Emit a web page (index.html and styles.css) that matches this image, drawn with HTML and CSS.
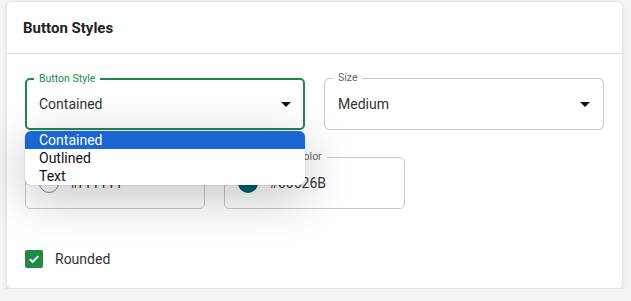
FILE: index.html
```html
<!DOCTYPE html>
<html lang="en">
<head>
  <meta charset="UTF-8" />
  <meta name="viewport" content="width=device-width, initial-scale=1.0" />
  <title>Button Styles</title>
  <link rel="stylesheet" href="styles.css">
</head>

<body>
  <div class="card">
    <header>Button Styles</header>

    <div class="content">
      <div class="row two">
        <div class="field focused">
          <span class="label">Button Style</span>
          <span class="value">Contained</span>
          <span class="arrow"></span>

          <ul class="menu">
            <li class="selected">Contained</li>
            <li>Outlined</li>
            <li>Text</li>
          </ul>
        </div>

        <div class="field">
          <span class="label">Size</span>
          <span class="value">Medium</span>
          <span class="arrow"></span>
        </div>
      </div>

      <div class="row three">
        <div class="field">
          <span class="label">Text Color</span>
          <span class="swatch white"></span>
          <span class="value">#FFFFFF</span>
        </div>

        <div class="field">
          <span class="label">Background Color</span>
          <span class="swatch teal"></span>
          <span class="value">#00626B</span>
        </div>
      </div>

      <label class="check">
        <span class="box">
          <svg width="12" height="12" viewBox="0 0 12 12">
            <path d="M1.8 6.2 L4.7 9 L10.3 3.2" fill="none" stroke="#fff" stroke-width="1.9" />
          </svg>
        </span>
        Rounded
      </label>
    </div>
  </div>
</body>
</html>
```

FILE: styles.css
```css
:root {
  --green: #1e8a48;
  --text: #333;
  --line: #c8c8c8;
  --bg: #f4f4f7;
}

* {
  box-sizing: border-box;
}

body {
  margin: 0;
  padding: 1px 8px 0 6px;
  background: var(--bg);
  font-family: Roboto, "Liberation Sans", sans-serif;
  color: var(--text);
}

.card {
  background: #fff;
  border-radius: 5px;
  border: 1px solid #e6e6ea;
  box-shadow: 0 2px 3px rgba(40, 40, 80, 0.12);
}

header {
  height: 52px;
  display: flex;
  align-items: center;
  padding: 0 16px;
  font-size: 15px;
  font-weight: 700;
  color: #222;
  border-bottom: 1px solid #e3e3e3;
}

.content {
  padding: 24px 18px 20px 18px;
}

.row {
  display: grid;
  gap: 19px;
  margin-bottom: 27px;
}

.row.two {
  grid-template-columns: 1fr 1fr;
}

.row.three {
  grid-template-columns: 1fr 1fr 1fr;
  margin-bottom: 41px;
}

.field {
  position: relative;
  height: 52px;
  border: 1px solid var(--line);
  border-radius: 5px;
  display: flex;
  align-items: center;
  padding: 0 13px;
  gap: 11px;
}

.field.focused {
  border: 2px solid var(--green);
  padding: 0 12px;
}

.label {
  position: absolute;
  top: -8px;
  left: 8px;
  padding: 0 5px;
  background: #fff;
  font-size: 10.5px;
  line-height: 14px;
  color: #666;
}

.focused .label {
  left: 7px;
  color: var(--green);
}

.value {
  font-size: 14px;
  color: #333;
}

.arrow {
  margin-left: auto;
  width: 0;
  height: 0;
  border-left: 5px solid transparent;
  border-right: 5px solid transparent;
  border-top: 5px solid #111;
}

.swatch {
  width: 20px;
  height: 20px;
  border-radius: 50%;
  flex-shrink: 0;
}

.swatch.white {
  background: #fff;
  border: 1px solid #8a8a9a;
}

.swatch.teal {
  background: #00626b;
}

.menu {
  position: absolute;
  top: 51px;
  left: -2px;
  right: -2px;
  margin: 0;
  padding: 0;
  list-style: none;
  background: #fff;
  border-radius: 6px;
  overflow: hidden;
  box-shadow: 0 0 1px rgba(0, 0, 0, 0.5), 0 12px 48px rgba(0, 0, 0, 0.24);
  z-index: 2;
}

.menu li {
  height: 18px;
  line-height: 18px;
  padding: 0 14px;
  font-size: 14px;
  color: #111;
}

.menu li.selected {
  background: #1b66d2;
  color: #fff;
}

.check {
  display: flex;
  align-items: center;
  gap: 12px;
  font-size: 14px;
  color: #333;
}

.box {
  width: 18px;
  height: 18px;
  border-radius: 2px;
  background: var(--green);
  display: flex;
  align-items: center;
  justify-content: center;
}
```
